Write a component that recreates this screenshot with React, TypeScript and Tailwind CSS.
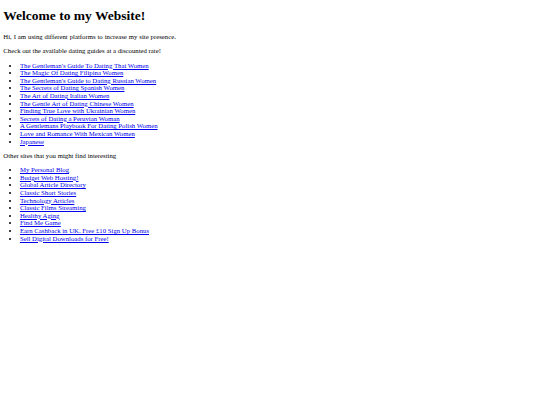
const guides = [
  "The Gentleman's Guide To Dating Thai Women",
  "The Magic Of Dating Filipina Women",
  "The Gentleman's Guide to Dating Russian Women",
  "The Secrets of Dating Spanish Women",
  "The Art of Dating Italian Women",
  "The Gentle Art of Dating Chinese Women",
  "Finding True Love with Ukrainian Women",
  "Secrets of Dating a Peruvian Woman",
  "A Gentlemans Playbook For Dating Polish Women",
  "Love and Romance With Mexican Women",
  "Japanese",
]

const others = [
  "My Personal Blog",
  "Budget Web Hosting!",
  "Global Article Directory",
  "Classic Short Stories",
  "Technology Articles",
  "Classic Films Streaming",
  "Healthy Aging",
  "Find Me Game",
  "Earn Cashback in UK. Free £10 Sign Up Bonus",
  "Sell Digital Downloads for Free!",
]

function LinkList({ items }: { items: string[] }) {
  return (
    <ul className="my-[6.8px] list-disc pl-[16.6px]">
      {items.map((t) => (
        <li key={t}>
          <a href="#" className="text-[#0000ee] underline">
            {t}
          </a>
        </li>
      ))}
    </ul>
  )
}

export default function App() {
  return (
    <div className="min-h-[405px] bg-white px-[3.3px] pb-[3.3px] font-['Liberation_Serif',serif] text-[6.75px] leading-[7.6px] text-black">
      <h1 className="mt-[8.3px] mb-[9px] text-[13.5px] font-bold leading-[15.5px]">Welcome to my Website!</h1>
      <p className="my-[6.8px] [word-spacing:0.25px]">Hi, I am using different platforms to increase my site presence.</p>
      <p className="my-[6.8px]">Check out the available dating guides at a discounted rate!</p>
      <LinkList items={guides} />
      <p className="my-[6.8px]">Other sites that you might find interesting</p>
      <LinkList items={others} />
    </div>
  )
}
